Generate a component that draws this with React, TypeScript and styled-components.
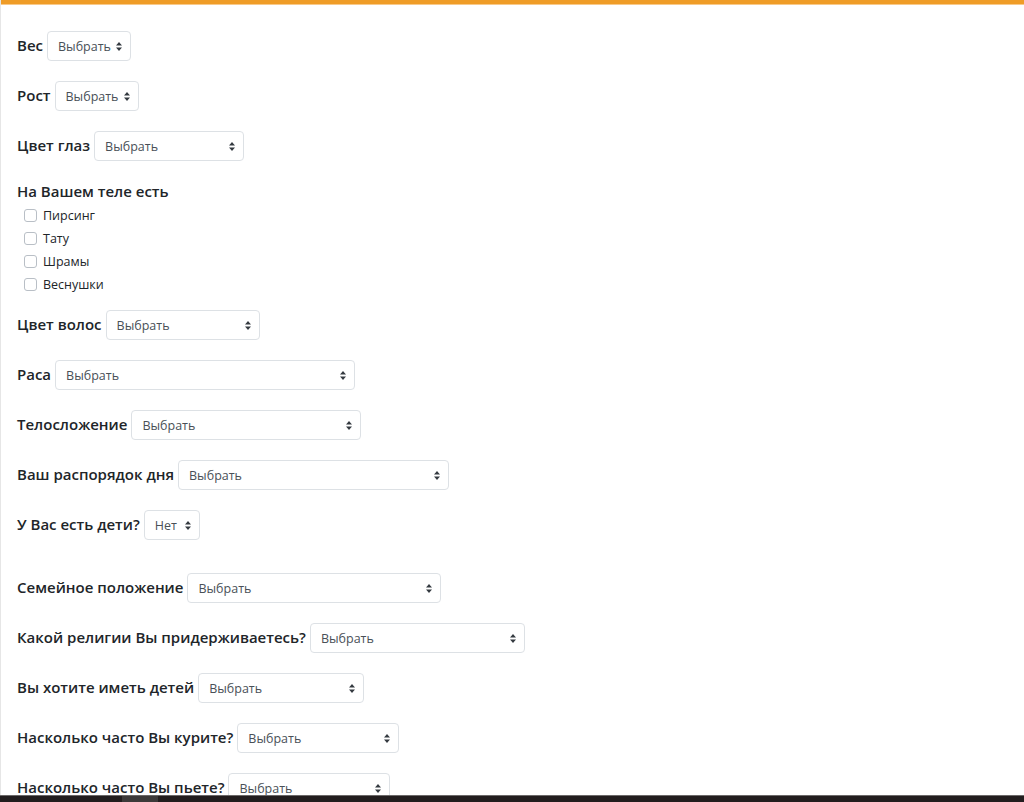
import React from "react";
import styled, { createGlobalStyle } from "styled-components";

const Global = createGlobalStyle`
  html, body { margin: 0; padding: 0; background: #fff; }
  body { font-family: "Open Sans", "Noto Sans", sans-serif; color: #212529; overflow: hidden; height: 802px; }
`;

const Page = styled.div`
  min-height: 802px;
  border-left: 1px solid #e6e6e6;
  box-sizing: border-box;
`;

const TopBar = styled.div`
  height: 4px;
  background: #ef9c27;
  border-bottom: 1px solid #f8c98a;
`;

const Form = styled.div`
  padding: 26px 0 0 16px;
  display: flex;
  flex-direction: column;
`;

const Row = styled.div<{ $after?: number }>`
  display: flex;
  align-items: center;
  height: 30px;
  margin-bottom: ${(p) => p.$after ?? 20}px;
`;

const Label = styled.label`
  font-size: 15px;
  font-weight: 600;
  color: #212529;
  margin-right: 4px;
  padding-bottom: 3px;
  white-space: nowrap;
`;

const SelectWrap = styled.div<{ $w: number }>`
  position: relative;
  width: ${(p) => p.$w}px;
  height: 30px;
`;

const Select = styled.select`
  appearance: none;
  -webkit-appearance: none;
  width: 100%;
  height: 30px;
  box-sizing: border-box;
  border: 1px solid #dde1e5;
  border-radius: 4px;
  background: #fff;
  padding: 0 12px 0 10px;
  font-family: "Open Sans", "Noto Sans", sans-serif;
  font-size: 12.5px;
  color: #495057;
  outline: none;
  text-overflow: clip;
`;

const Arrow = styled.svg`
  position: absolute;
  right: 9px;
  top: 11px;
  width: 6px;
  height: 9px;
  pointer-events: none;
`;

const Heading = styled.div`
  font-size: 15px;
  font-weight: 600;
  line-height: 20px;
  margin-bottom: 3px;
`;

const CheckList = styled.div`
  display: flex;
  flex-direction: column;
  padding-left: 7px;
  margin-bottom: 14px;
`;

const CheckRow = styled.label`
  display: flex;
  align-items: center;
  height: 23px;
  font-size: 12.5px;
  color: #212529;
`;

const Box = styled.span`
  width: 13px;
  height: 13px;
  box-sizing: border-box;
  border: 1px solid #b9bfc6;
  border-radius: 3px;
  background: #fff;
  margin-right: 6px;
`;

const BottomBar = styled.div`
  position: fixed;
  left: 0;
  right: 0;
  bottom: 0;
  height: 6px;
  background: #221d1e;
  border-top: 1px solid #6b6868;
  display: flex;
`;

const TaskItem = styled.div`
  margin-left: 122px;
  width: 36px;
  background: #3c3939;
`;

function Field({ label, w, value = "Выбрать", after }: { label: string; w: number; value?: string; after?: number }) {
  return (
    <Row $after={after}>
      <Label>{label}</Label>
      <SelectWrap $w={w}>
        <Select defaultValue={value}>
          <option>{value}</option>
        </Select>
        <Arrow viewBox="0 0 6 9">
          <path d="M3 0 L6 3.4 L0 3.4 Z M3 9 L6 5.6 L0 5.6 Z" fill="#343a40" />
        </Arrow>
      </SelectWrap>
    </Row>
  );
}

export default function App() {
  return (
    <>
      <Global />
      <Page>
        <TopBar />
        <Form>
          <Field label="Вес" w={84} />
          <Field label="Рост" w={84} />
          <Field label="Цвет глаз" w={150} />
          <Heading>На Вашем теле есть</Heading>
          <CheckList>
            {["Пирсинг", "Тату", "Шрамы", "Веснушки"].map((t) => (
              <CheckRow key={t}>
                <Box />
                {t}
              </CheckRow>
            ))}
          </CheckList>
          <Field label="Цвет волос" w={154} />
          <Field label="Раса" w={300} />
          <Field label="Телосложение" w={230} />
          <Field label="Ваш распорядок дня" w={271} />
          <Field label="У Вас есть дети?" w={56} value="Нет" after={33} />
          <Field label="Семейное положение" w={254} />
          <Field label="Какой религии Вы придерживаетесь?" w={215} />
          <Field label="Вы хотите иметь детей" w={166} />
          <Field label="Насколько часто Вы курите?" w={162} />
          <Field label="Насколько часто Вы пьете?" w={162} />
        </Form>
        <BottomBar>
          <TaskItem />
        </BottomBar>
      </Page>
    </>
  );
}
